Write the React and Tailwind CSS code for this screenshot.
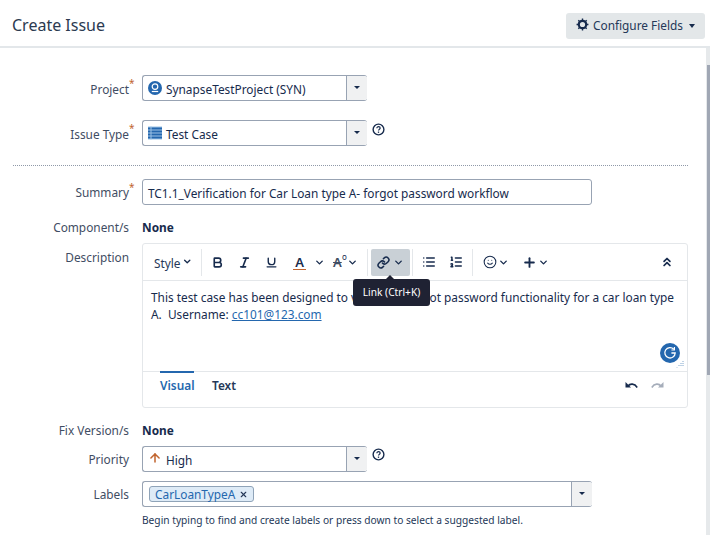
import React from "react";
import { ChevronDown, Bold, Italic, Underline, Link, List, ListOrdered, Smile, Plus, ChevronsUp, ArrowUp, X } from "lucide-react";

function Label({ children, req }) {
  return (
    <div className="w-[129px] shrink-0 text-right text-[#3f4d63] relative leading-[20px]">
      {children}
      {req && <span className="absolute left-[129px] top-[1px] text-[#c1652f] text-[10px] leading-[14px]">*</span>}
    </div>
  );
}

function Help({ className = "" }) {
  return (
    <svg className={`-ml-[8px] shrink-0 ${className}`} width="13" height="13" viewBox="0 0 14 14" fill="none">
      <circle cx="7" cy="7" r="5.8" stroke="#172b4d" strokeWidth="1.5" />
      <path d="M5.2 5.6c0-1 .8-1.6 1.8-1.6s1.8.6 1.8 1.5c0 1.3-1.8 1.4-1.8 2.7" stroke="#172b4d" strokeWidth="1.3" />
      <rect x="6.3" y="9.2" width="1.4" height="1.4" fill="#172b4d" />
    </svg>
  );
}

function Arrow() {
  return (
    <div className="w-[21px] shrink-0 h-full bg-[#f0f1f2] border-l border-[#98a3b3] flex items-center justify-center rounded-r-[3px]">
      <span className="-mt-[2px] w-0 h-0 border-l-[3px] border-r-[3px] border-t-[3px] border-l-transparent border-r-transparent border-t-[#172b4d]" />
    </div>
  );
}

function Select({ icon, text }) {
  return (
    <div className="w-[225px] h-[26px] flex items-stretch border border-[#98a3b3] border-r-0 rounded-[3px] bg-white">
      <div className="flex-1 flex items-center pl-[5px] gap-[4px] text-[#172b4d] min-w-0 whitespace-nowrap">
        {icon}
        <span className="mt-[3px]">{text}</span>
      </div>
      <Arrow />
    </div>
  );
}

function Tool({ children, className = "" }) {
  return <div className={`flex items-center justify-center text-[#172b4d] ${className}`}>{children}</div>;
}

function Sep({ className = "" }) {
  return <div className={`w-px h-[27px] bg-[#e4e7ea] shrink-0 ${className}`} />;
}

export default function App() {
  return (
    <div className="w-[710px] h-[535px] overflow-hidden bg-white flex flex-col text-[11.85px] text-[#172b4d] font-['Noto_Sans','Open_Sans',sans-serif]">
      <header className="h-[48px] shrink-0 border-b-2 border-[#e3e7ea] flex items-center justify-between pl-[12px] pr-[5px]">
        <h1 className="text-[16px] font-normal text-[#2b3a50] leading-[24px] mt-[4px]">Create Issue</h1>
        <button className="h-[26px] w-[139px] bg-[#e3e7e9] rounded-[3px] flex items-center justify-center gap-[4px] text-[#253858] mt-[5px]">
          <svg className="-mt-[2px]" width="13" height="13" viewBox="0 0 14 14" fill="none">
            <circle cx="7" cy="7" r="4" stroke="#172b4d" strokeWidth="2.4" />
            <path d="M7 0.6v2M7 11.4v2M0.6 7h2M11.4 7h2M2.5 2.5l1.3 1.3M10.2 10.2l1.3 1.3M11.5 2.5l-1.3 1.3M3.8 10.2l-1.3 1.3" stroke="#172b4d" strokeWidth="1.5" />
          </svg>
          <span>Configure Fields</span>
          <span className="ml-[2px] w-0 h-0 border-l-[3.5px] border-r-[3.5px] border-t-[4px] border-l-transparent border-r-transparent border-t-[#172b4d]" />
        </button>
      </header>

      <div className="flex-1 flex min-h-0">
        <main className="flex-1 min-w-0 pt-[27px] relative">
          <div className="flex items-start gap-[13px] h-[26px]">
            <Label req><span className="inline-block mt-[4px]">Project</span></Label>
            <Select
              text="SynapseTestProject (SYN)"
              icon={
                <svg width="14" height="14" viewBox="0 0 14 14">
                  <circle cx="7" cy="7" r="7" fill="#2467ae" />
                  <circle cx="7" cy="5.6" r="2.8" fill="none" stroke="#fff" strokeWidth="1.2" />
                  <path d="M3.8 10.5h6.4" stroke="#fff" strokeWidth="1.2" />
                </svg>
              }
            />
          </div>

          <div className="flex items-start gap-[13px] h-[26px] mt-[19px]">
            <Label req><span className="inline-block mt-[4px]">Issue Type</span></Label>
            <Select
              text="Test Case"
              icon={
                <svg width="14" height="14" viewBox="0 0 14 14">
                  <rect x="0" y="0.5" width="14" height="13" fill="#9cc3e6" />
                  <path d="M0 2.5h14M0 5.5h14M0 8.5h14M0 11.5h14" stroke="#2467ae" strokeWidth="2" />
                  <path d="M3 0.5v13" stroke="#9cc3e6" strokeWidth="1" />
                </svg>
              }
            />
            <Help className="mt-[3px]" />
          </div>

          <div className="ml-[13px] mr-[18px] mt-[19px] border-t border-dotted border-[#8f99a8]" />

          <div className="flex items-start gap-[13px] mt-[13px] h-[26px]">
            <Label req><span className="inline-block mt-[3px]">Summary</span></Label>
            <div className="w-[450px] h-[26px] border border-[#98a3b3] rounded-[3px] flex items-center pl-[5px] whitespace-nowrap">
              <span className="mt-[3px]">TC1.1_Verification for Car Loan type A- forgot password workflow</span>
            </div>
          </div>

          <div className="flex items-start gap-[13px] mt-[12px] h-[20px]">
            <Label>Component/s</Label>
            <span className="font-bold leading-[20px]">None</span>
          </div>

          <div className="flex items-start gap-[13px] mt-[6px]">
            <Label><span className="inline-block mt-[4px]">Description</span></Label>
            <div className="w-[546px] h-[165px] border border-[#e4e7ea] rounded-[3px] flex flex-col relative">
              <div className="h-[37px] shrink-0 border-b border-[#e4e7ea] flex items-center">
                <Tool className="ml-[11px] gap-[1px] w-[38px]">
                  <span className="text-[#253858] mt-[4px]">Style</span>
                  <ChevronDown size={11} strokeWidth={3} />
                </Tool>
                <Sep className="ml-[9px]" />
                <Tool className="ml-[9px]"><Bold size={13} strokeWidth={3} /></Tool>
                <Tool className="ml-[14px]"><Italic size={13} strokeWidth={3} /></Tool>
                <Tool className="ml-[14px]"><Underline size={13} strokeWidth={2.6} /></Tool>
                <Tool className="ml-[15px] flex-col relative">
                  <span className="text-[13px] leading-[14px] font-semibold">A</span>
                  <span className="w-[13px] h-[1px] bg-[#c1652f]" />
                </Tool>
                <Tool className="ml-[8px]"><ChevronDown size={11} strokeWidth={3} /></Tool>
                <Tool className="ml-[8px] relative">
                  <span className="text-[13px] leading-[14px] font-semibold line-through text-[#3f4d63]">A</span>
                  <span className="absolute left-[9px] top-[-2px] text-[8px] leading-[8px]">o</span>
                  <ChevronDown size={11} strokeWidth={3} className="ml-[5px]" />
                </Tool>
                <Sep className="ml-[9px]" />
                <Tool className="ml-[3px] w-[39px] h-[27px] bg-[#c9d0d6] rounded-[2px] gap-[3px]">
                  <Link size={13} strokeWidth={2.8} />
                  <ChevronDown size={11} strokeWidth={3} />
                </Tool>
                <Sep className="ml-[2px]" />
                <Tool className="ml-[9px]"><List size={14} strokeWidth={2.6} /></Tool>
                <Tool className="ml-[13px]"><ListOrdered size={14} strokeWidth={2.6} /></Tool>
                <Sep className="ml-[9px]" />
                <Tool className="ml-[10px] gap-[1px]"><Smile size={14} strokeWidth={1.8} /><ChevronDown size={11} strokeWidth={3} /></Tool>
                <Tool className="ml-[13px] gap-[1px]"><Plus size={15} strokeWidth={3} /><ChevronDown size={11} strokeWidth={3} /></Tool>
                <Tool className="ml-auto mr-[13px]"><ChevronsUp size={14} strokeWidth={3} /></Tool>
              </div>
              <div className="flex-1 relative px-[8px] pt-[8px] leading-[17px] text-[#172b4d]">
                <p className="w-[530px]">
                  This test case has been designed to verify the forgot password functionality for a car loan type A.&nbsp; Username:{" "}
                  <a className="text-[#2467ae] underline">cc101@123.com</a>
                </p>
                <div className="absolute right-[7px] bottom-[8px] w-[20px] h-[20px] rounded-full bg-[#2467ae] flex items-center justify-center">
                  <svg width="14" height="14" viewBox="0 0 14 14" fill="none">
                    <path d="M10.8 3.2A5.2 5.2 0 1 0 12.2 7H8.4" stroke="#fff" strokeWidth="1.3" />
                    <path d="M11.4 1v3h-3" stroke="#fff" strokeWidth="1.2" />
                  </svg>
                </div>
                <svg className="absolute right-[3px] bottom-[3px]" width="8" height="8" viewBox="0 0 8 8">
                  <path d="M7 1v6M5 3v4M3 5v2M1 7v0.5" stroke="#7fa6cc" strokeWidth="1" strokeDasharray="1 1" />
                </svg>
              </div>
              <div className="h-[36px] shrink-0 border-t border-[#e4e7ea] flex items-start pl-[17px] pr-[23px]">
                <div className="w-[34px] -mt-px border-t-2 border-[#2467ae] text-center font-semibold text-[#2467ae] pt-[3px] leading-[18px]">Visual</div>
                <div className="ml-[18px] pt-[4px] font-semibold text-[#253858] leading-[18px]">Text</div>
                <div className="ml-auto flex items-center gap-[13px] mt-[9px]">
                  <svg width="13" height="8" viewBox="0 0 13 8" fill="none">
                    <path d="M3 5C5 2.4 9.5 2.2 12.2 6.5" stroke="#172b4d" strokeWidth="1.6" />
                    <path d="M0.5 1v5.5H6z" fill="#172b4d" />
                  </svg>
                  <svg width="13" height="8" viewBox="0 0 13 8" fill="none">
                    <path d="M10 5C8 2.4 3.5 2.2 0.8 6.5" stroke="#a5adba" strokeWidth="1.6" />
                    <path d="M12.5 1v5.5H7z" fill="#a5adba" />
                  </svg>
                </div>
              </div>
            </div>
          </div>

          <div className="flex items-start gap-[13px] mt-[12px] h-[20px]">
            <Label>Fix Version/s</Label>
            <span className="font-bold leading-[20px]">None</span>
          </div>

          <div className="flex items-start gap-[13px] mt-[6px] h-[26px]">
            <Label><span className="inline-block mt-[3px]">Priority</span></Label>
            <Select
              text="High"
              icon={<ArrowUp size={14} strokeWidth={2.6} color="#c1652f" className="-mt-[2px]" />}
            />
            <Help className="mt-[2px]" />
          </div>

          <div className="flex items-start gap-[13px] mt-[9px] h-[26px]">
            <Label><span className="inline-block mt-[3px]">Labels</span></Label>
            <div className="w-[450px] h-[26px] border border-[#98a3b3] border-r-0 rounded-[3px] flex items-stretch">
              <div className="flex-1 flex items-center pl-[6px]">
                <span className="h-[16px] flex items-center gap-[4px] px-[5px] bg-[#deebf7] border border-[#8fa3b8] rounded-[3px] text-[#2467ae] leading-[14px]">
                  CarLoanTypeA
                  <X size={9} strokeWidth={3} color="#253858" />
                </span>
              </div>
              <Arrow />
            </div>
          </div>

          <p className="ml-[142px] mt-[5px] text-[10.2px] leading-[16px] text-[#253858] whitespace-nowrap">
            Begin typing to find and create labels or press down to select a suggested label.
          </p>

          <div className="absolute left-[353px] top-[231px] w-[77px] h-[27px] pt-[1px] bg-[#1f2233] rounded-[3px] text-white text-[10.2px] flex items-center justify-center whitespace-nowrap">
            <span className="absolute -top-[4px] left-[33px] w-0 h-0 border-l-[4px] border-r-[4px] border-b-[4px] border-l-transparent border-r-transparent border-b-[#1f2233]" />
            Link (Ctrl+K)
          </div>
        </main>
        <aside className="w-[4px] shrink-0 bg-[#e6e9eb] pt-[17px]">
          <div className="h-[310px] ml-px bg-[#a0a7b4]" />
        </aside>
      </div>
    </div>
  );
}
